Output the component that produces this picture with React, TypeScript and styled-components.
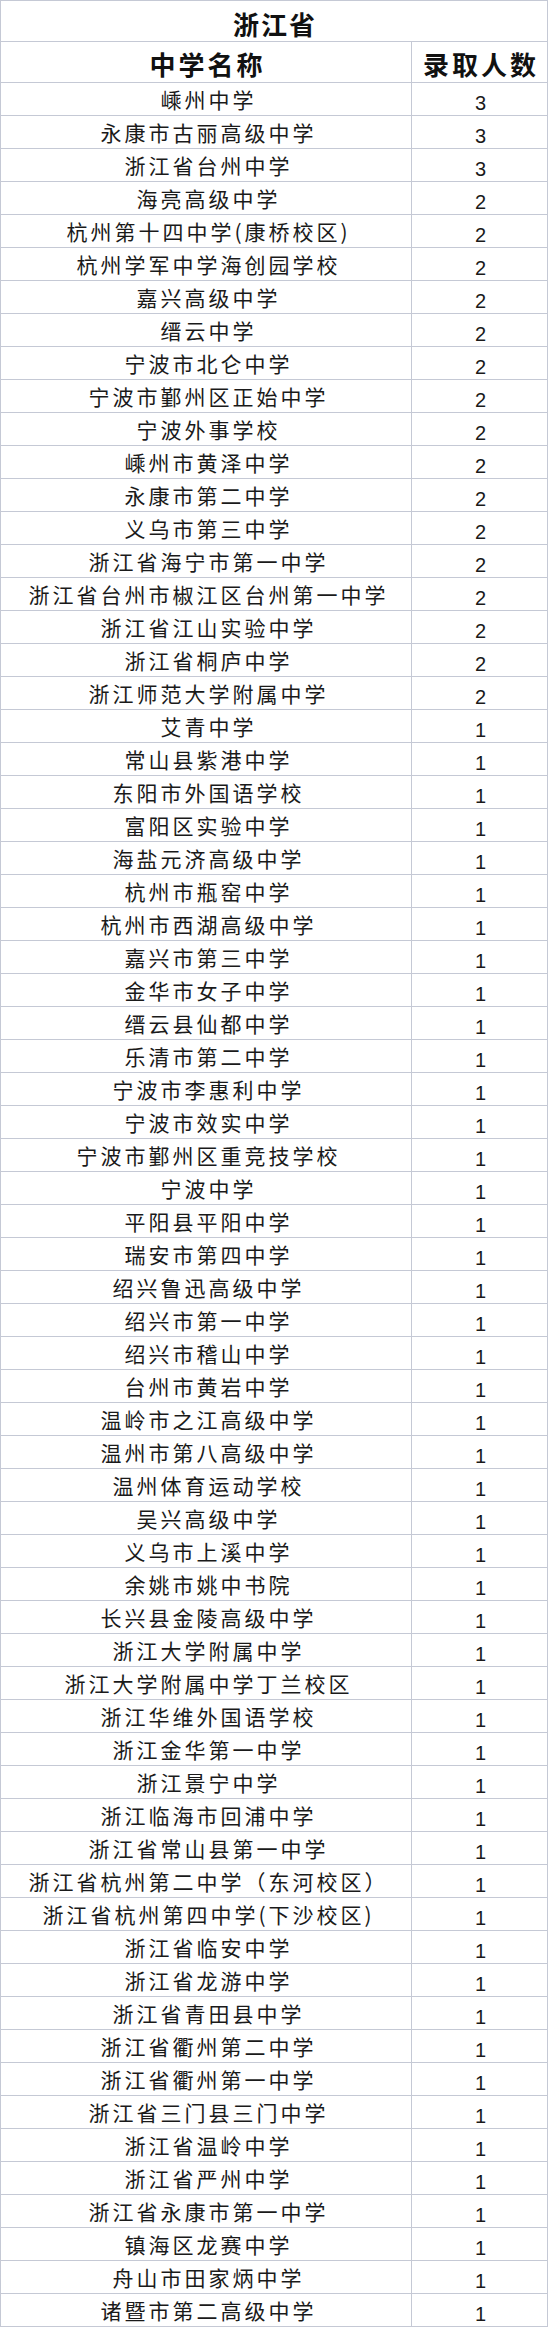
import React from "react";
import styled, { createGlobalStyle } from "styled-components";

const GlobalStyle = createGlobalStyle`
  html, body {
    margin: 0;
    padding: 0;
    background: #ffffff;
  }
  * { box-sizing: border-box; }
`;

const rows: [string, number][] = [
  ["嵊州中学", 3],
  ["永康市古丽高级中学", 3],
  ["浙江省台州中学", 3],
  ["海亮高级中学", 2],
  ["杭州第十四中学(康桥校区)", 2],
  ["杭州学军中学海创园学校", 2],
  ["嘉兴高级中学", 2],
  ["缙云中学", 2],
  ["宁波市北仑中学", 2],
  ["宁波市鄞州区正始中学", 2],
  ["宁波外事学校", 2],
  ["嵊州市黄泽中学", 2],
  ["永康市第二中学", 2],
  ["义乌市第三中学", 2],
  ["浙江省海宁市第一中学", 2],
  ["浙江省台州市椒江区台州第一中学", 2],
  ["浙江省江山实验中学", 2],
  ["浙江省桐庐中学", 2],
  ["浙江师范大学附属中学", 2],
  ["艾青中学", 1],
  ["常山县紫港中学", 1],
  ["东阳市外国语学校", 1],
  ["富阳区实验中学", 1],
  ["海盐元济高级中学", 1],
  ["杭州市瓶窑中学", 1],
  ["杭州市西湖高级中学", 1],
  ["嘉兴市第三中学", 1],
  ["金华市女子中学", 1],
  ["缙云县仙都中学", 1],
  ["乐清市第二中学", 1],
  ["宁波市李惠利中学", 1],
  ["宁波市效实中学", 1],
  ["宁波市鄞州区重竞技学校", 1],
  ["宁波中学", 1],
  ["平阳县平阳中学", 1],
  ["瑞安市第四中学", 1],
  ["绍兴鲁迅高级中学", 1],
  ["绍兴市第一中学", 1],
  ["绍兴市稽山中学", 1],
  ["台州市黄岩中学", 1],
  ["温岭市之江高级中学", 1],
  ["温州市第八高级中学", 1],
  ["温州体育运动学校", 1],
  ["吴兴高级中学", 1],
  ["义乌市上溪中学", 1],
  ["余姚市姚中书院", 1],
  ["长兴县金陵高级中学", 1],
  ["浙江大学附属中学", 1],
  ["浙江大学附属中学丁兰校区", 1],
  ["浙江华维外国语学校", 1],
  ["浙江金华第一中学", 1],
  ["浙江景宁中学", 1],
  ["浙江临海市回浦中学", 1],
  ["浙江省常山县第一中学", 1],
  ["浙江省杭州第二中学（东河校区）", 1],
  ["浙江省杭州第四中学(下沙校区)", 1],
  ["浙江省临安中学", 1],
  ["浙江省龙游中学", 1],
  ["浙江省青田县中学", 1],
  ["浙江省衢州第二中学", 1],
  ["浙江省衢州第一中学", 1],
  ["浙江省三门县三门中学", 1],
  ["浙江省温岭中学", 1],
  ["浙江省严州中学", 1],
  ["浙江省永康市第一中学", 1],
  ["镇海区龙赛中学", 1],
  ["舟山市田家炳中学", 1],
  ["诸暨市第二高级中学", 1],
];

const BORDER = "#c5c9d5";
const CJK = `"Noto Sans CJK SC", "Noto Sans", sans-serif`;

const Table = styled.div`
  display: grid;
  grid-template-columns: 411px 136px;
  width: 548px;
  border-left: 1px solid ${BORDER};
  border-top: 1px solid ${BORDER};
  color: #1a1a1a;
`;

const Cell = styled.div<{ $shift?: number }>`
  display: flex;
  align-items: center;
  justify-content: center;
  border-right: 1px solid ${BORDER};
  border-bottom: 1px solid ${BORDER};
  line-height: 1;
  white-space: nowrap;
  padding-top: ${(p) => (p.$shift ?? 0) * 2}px;
`;

const TitleCell = styled(Cell)`
  grid-column: 1 / -1;
  height: 41px;
  font-family: ${CJK};
  font-weight: 700;
  font-size: 26px;
  letter-spacing: 2px;
  padding-left: 2px;
  color: #111;
`;

const HeadCell = styled(Cell)`
  height: 41px;
  font-family: ${CJK};
  font-weight: 700;
  font-size: 26px;
  letter-spacing: 3px;
  padding-left: 3px;
  color: #111;
`;

const NameCell = styled(Cell)`
  height: 33px;
  font-family: ${CJK};
  font-weight: 400;
  font-size: 21px;
  letter-spacing: 3px;
  padding-left: 5px;
`;

const CountCell = styled(Cell)`
  height: 33px;
  font-family: "Liberation Sans", Arial, sans-serif;
  font-size: 20px;
  padding-left: 2px;
`;

export default function App() {
  return (
    <>
      <GlobalStyle />
      <Table>
        <TitleCell $shift={3}>浙江省</TitleCell>
        <HeadCell $shift={2}>中学名称</HeadCell>
        <HeadCell $shift={2}>录取人数</HeadCell>
        {rows.map(([name, n], i) => (
          <React.Fragment key={i}>
            <NameCell $shift={0.3}>{name}</NameCell>
            <CountCell $shift={4}>{n}</CountCell>
          </React.Fragment>
        ))}
      </Table>
    </>
  );
}
